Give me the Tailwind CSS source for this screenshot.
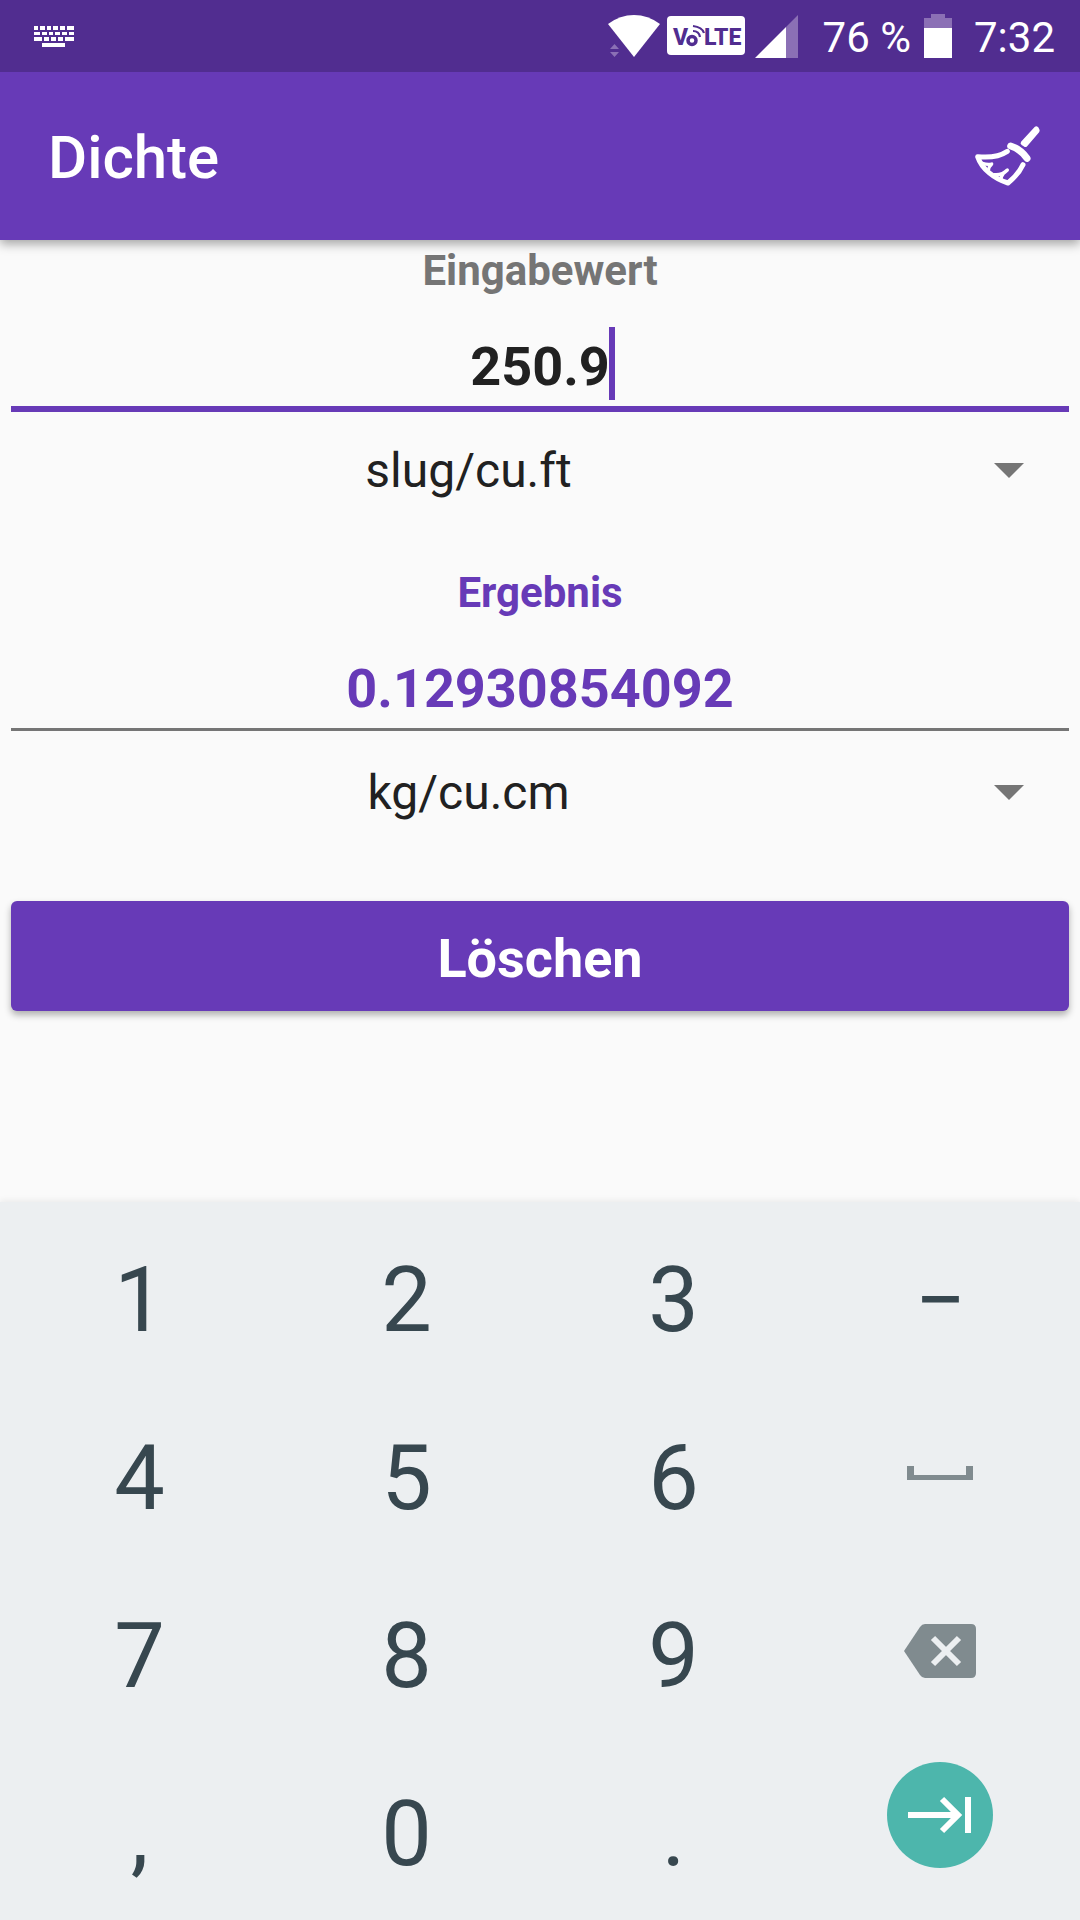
<!DOCTYPE html>
<html lang="de">
<head>
<meta charset="utf-8">
<meta name="viewport" content="width=device-width, initial-scale=1">
<title>Dichte</title>
<script src="https://cdn.jsdelivr.net/npm/@tailwindcss/browser@4"></script>
</head>
<body class="flex min-h-screen flex-col bg-[#fafafa] font-['Roboto',sans-serif] text-[#212121]">

  <!-- Status bar -->
  <div class="relative z-10 flex h-18 items-center bg-[#512d90] pr-[25px] pl-8.5 text-[42px] leading-[50px] text-white">
    <svg class="h-[22px] w-10" viewBox="0 0 40 22" fill="#fff" aria-hidden="true">
      <path d="M0 1h4v4H0zM6 1h5v4H6zM13 1h4v4h-4zM19 1h5v4h-5zM26 1h5v4h-5zM33 1h7v4h-7zM0 7h6v3H0zM8 7h5v3H8zM15 7h4v3h-4zM21 7h5v3h-5zM28 7h5v3h-5zM35 7h5v3h-5zM0 12h8v4H0zM10 12h5v4h-5zM17 12h5v4h-5zM24 12h5v4h-5zM31 12h9v4h-9zM8 18h23v4H8z"/>
    </svg>
    <svg class="ml-auto h-[42px] w-[52px]" viewBox="0 0 52 42" aria-hidden="true">
      <path d="M0 9Q12 0 26 0T52 9L26 42z" fill="#fff"/>
      <path d="M2 34l4.500-5 4.500 5zM2 37h9l-4.500 5z" fill="#8b70b5"/>
    </svg>
    <svg class="ml-[7px] h-10 w-[78px]" viewBox="0 0 78 40" role="img" aria-label="VoLTE">
      <rect width="78" height="39" rx="4" fill="#fff"/>
      <g fill="#512d90" font-family="Roboto" font-weight="800" font-size="23">
        <text x="6" y="29">V</text>
        <text x="37" y="29">LTE</text>
      </g>
      <g fill="none" stroke="#512d90">
        <circle cx="25" cy="24.500" r="4" stroke-width="3.500"/>
        <path d="M26 15Q32 15 33 21M26 10Q35 11 37 17" stroke-width="2.200"/>
      </g>
    </svg>
    <svg class="ml-2.5 h-[43px] w-[43px]" viewBox="0 0 43 43" aria-hidden="true">
      <path d="M43 0v43H31V12z" fill="#8b70b5"/>
      <path d="M31 12v31H0z" fill="#fff"/>
    </svg>
    <span class="ml-[25px] pt-1">76 %</span>
    <svg class="ml-[13px] h-11 w-7" viewBox="0 0 28 44" aria-hidden="true">
      <path d="M7 0h14v4h7v10H0V4h7z" fill="#8b70b5"/>
      <path d="M0 14h28v30H0z" fill="#fff"/>
    </svg>
    <span class="ml-5.5 pt-1">7:32</span>
  </div>

  <!-- App bar -->
  <header class="relative flex h-42 items-center justify-between bg-[#673ab7] pr-[37px] pl-12 text-white shadow-[0_4px_10px_rgba(0,0,0,0.35)]">
    <h1 class="pt-1 text-[60px] leading-[70px] font-medium">Dichte</h1>
    <button type="button" aria-label="Eingaben leeren" class="cursor-pointer">
      <svg class="h-[65px] w-[70px]" viewBox="100 70 210 195" fill="none" stroke="#fff" stroke-linecap="round" stroke-linejoin="round">
        <path d="M290 84L293 90L257 132L250 127z" fill="#fff" stroke-width="14"/>
        <path d="M213 136Q242 145 262 173" stroke-width="21"/>
        <path d="M203 152Q170 174 114 168C126 205 164 234 205 247Q236 222 250 192" stroke-width="15"/>
        <path d="M128 188Q144 193 156 190Q147 199 147 206M164 222Q188 224 203 208Q184 222 184 236" stroke-width="10"/>
      </svg>
    </button>
  </header>

  <!-- Converter form -->
  <main class="flex grow flex-col px-[11px] pt-1.5 pb-10">
    <label for="eingabe" class="text-center text-[42px] leading-[50px] font-bold text-[#757575]">Eingabewert</label>
    <div class="relative mt-7.5">
      <input id="eingabe" type="text" inputmode="decimal" value="250.9" class="block h-[86px] w-full border-b-6 border-[#673ab7] text-center text-[54px] font-bold outline-none">
      <span class="absolute top-px left-[calc(50%+69px)] h-[73px] w-1.5 bg-[#673ab7]"></span>
    </div>
    <div class="relative">
      <select aria-label="Einheit der Eingabe" class="block h-[118px] w-full appearance-none pr-[143px] text-[48px] [text-align-last:center]">
        <option>slug/cu.ft</option>
        <option>kg/cu.cm</option>
      </select>
      <svg class="pointer-events-none absolute top-[51px] right-[45px] h-[15px] w-[30px]" viewBox="0 0 30 15" fill="#757575" aria-hidden="true"><path d="M0 0h30L15 15z"/></svg>
    </div>

    <label for="ergebnis" class="mt-[38px] text-center text-[42px] leading-[50px] font-bold text-[#673ab7]">Ergebnis</label>
    <input id="ergebnis" type="text" readonly value="0.12930854092" class="mt-7.5 mb-[3px] block h-[83px] w-full border-b-3 border-[#757575] text-center text-[54px] font-bold text-[#673ab7] outline-none">
    <div class="relative">
      <select aria-label="Einheit des Ergebnisses" class="block h-[118px] w-full appearance-none pr-[143px] text-[48px] [text-align-last:center]">
        <option>kg/cu.cm</option>
        <option>slug/cu.ft</option>
      </select>
      <svg class="pointer-events-none absolute top-[51px] right-[45px] h-[15px] w-[30px]" viewBox="0 0 30 15" fill="#757575" aria-hidden="true"><path d="M0 0h30L15 15z"/></svg>
    </div>

    <button type="button" class="mt-[49px] h-[110px] cursor-pointer rounded-md bg-[#673ab7] pt-1 text-[54px] font-bold text-white shadow-[0_4px_7px_rgba(0,0,0,0.3)]">Löschen</button>
  </main>

  <!-- Numeric keyboard -->
  <div class="grid auto-rows-[178px] grid-cols-4 bg-[#eceff1] px-1.5 pt-1.5 text-[90px] text-[#37474f] shadow-[0_-2px_6px_rgba(0,0,0,0.06)]">
    <button type="button" class="pt-1.5">1</button>
    <button type="button" class="pt-1.5">2</button>
    <button type="button" class="pt-1.5">3</button>
    <button type="button" class="pt-1.5">−</button>
    <button type="button" class="pt-1.5">4</button>
    <button type="button" class="pt-1.5">5</button>
    <button type="button" class="pt-1.5">6</button>
    <button type="button" aria-label="Leerzeichen" class="flex items-center justify-center pr-0.5 pb-1">
      <svg class="h-3.5 w-[66px]" viewBox="0 0 66 14" fill="#808b8f"><path d="M0 0h7v9h52V0h7v14H0z"/></svg>
    </button>
    <button type="button" class="pt-1.5">7</button>
    <button type="button" class="pt-1.5">8</button>
    <button type="button" class="pt-1.5">9</button>
    <button type="button" aria-label="Löschtaste" class="flex items-center justify-center pr-0.5 pb-1">
      <svg class="h-[54px] w-[72px]" viewBox="0 0 72 54"><path d="M21 0H67Q72 0 72 5V49Q72 54 67 54H21Q18 54 16 51L0 27L16 3Q18 0 21 0z" fill="#808b8f"/><path d="M29 14L55 40M55 14L29 40" stroke="#eceff1" stroke-width="6"/></svg>
    </button>
    <button type="button" class="pt-1.5">,</button>
    <button type="button" class="pt-1.5">0</button>
    <button type="button" class="pt-1.5">.</button>
    <button type="button" aria-label="Weiter" class="flex items-start justify-center pt-5 pr-0.5">
      <svg class="size-[106px]" viewBox="0 0 106 106" fill="none" stroke="#fff" stroke-width="6"><circle cx="53" cy="53" r="53" fill="#4db6ac" stroke="none"/><path d="M21 53H71M55 37L71 53L55 69M81 35V71"/></svg>
    </button>
  </div>
</body>
</html>
